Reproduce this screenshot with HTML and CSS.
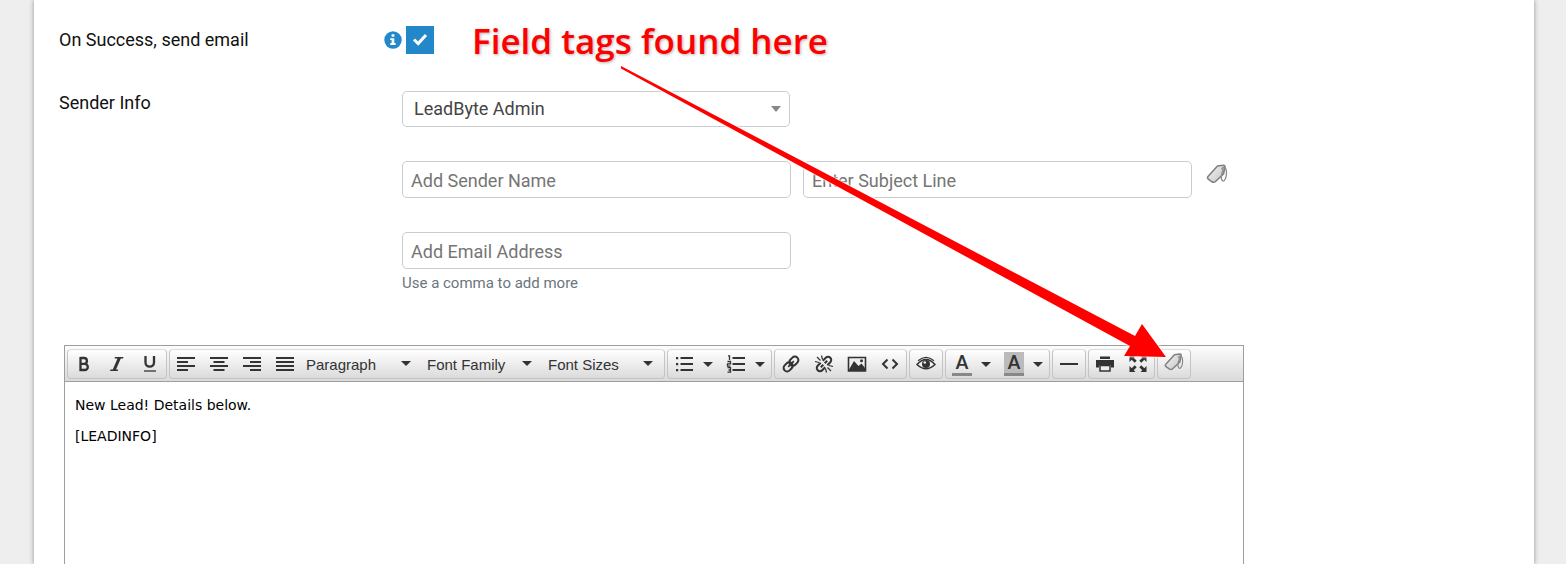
FILE: index.html
```html
<!DOCTYPE html>
<html lang="en">
<head>
    <meta charset="UTF-8">
    <meta name="viewport" content="width=device-width, initial-scale=1.0">
    <title>Email Notification Settings</title>
    <link rel="stylesheet" href="styles.css">
</head>
<body>
    <!-- tag icon shared by the subject line and the toolbar -->
    <svg class="defs" aria-hidden="true">
        <defs>
            <linearGradient id="tag-fill" x1="0" y1="0" x2="1" y2="1">
                <stop offset="0" stop-color="#f4f4f4"/>
                <stop offset="1" stop-color="#c4c4c4"/>
            </linearGradient>
        </defs>
        <symbol id="tag" viewBox="0 0 22 22">
            <path d="M11.500 3 L17.500 2.200 Q19 2.200 19 4 L17.500 11 L9.500 18.500 Q8 19.800 6 18.800 L2 15.800 Q1 14.800 2 13.500 Z" fill="url(#tag-fill)" stroke="#808080" stroke-width="1.600" stroke-linejoin="round"/>
            <path d="M15.500 6.500 C17 3.500 20.500 3.500 20.500 10 C20.500 15 18.500 18.500 17 18 C14.500 17 15 11 17.500 6" fill="none" stroke="#8a8a8a" stroke-width="1.300"/>
        </symbol>
    </svg>

    <main class="panel">
        <form class="form">
            <div class="row row-check">
                <div class="label-cell">
                    <label for="send-email">On Success, send email</label>
                    <button type="button" class="info" aria-label="Info">
                        <svg viewBox="0 0 18 18" width="18" height="18"><circle cx="9" cy="9" r="8.700" fill="#2388c9"/><path d="M7.600 3.300h2.800v2.500H7.600zM6.300 7.200h4v4.800h1.300v1.900H6.300V12h1.300V9H6.300z" fill="#fff"/></svg>
                    </button>
                </div>
                <div class="check">
                    <input type="checkbox" id="send-email" checked>
                    <svg viewBox="0 0 28 28" width="28" height="28"><path d="M8 13.500l4.200 4 7.800-8.500" fill="none" stroke="#fff" stroke-width="3"/></svg>
                </div>
            </div>

            <div class="row">
                <div class="label-cell"><label for="sender">Sender Info</label></div>
                <div class="fields">
                    <div class="select">
                        <select id="sender"><option>LeadByte Admin</option></select>
                    </div>
                    <div class="pair">
                        <input class="text" type="text" placeholder="Add Sender Name" aria-label="Sender name">
                        <input class="text" type="text" placeholder="Enter Subject Line" aria-label="Subject line">
                        <button type="button" class="tag-btn" aria-label="Field tags"><svg width="22" height="22"><use href="#tag"/></svg></button>
                    </div>
                    <div>
                        <input class="text" type="text" placeholder="Add Email Address" aria-label="Email address">
                        <p class="hint">Use a comma to add more</p>
                    </div>
                </div>
            </div>
        </form>

        <section class="editor">
            <div class="toolbar">
                <div class="group">
                    <button type="button" aria-label="Bold"><svg viewBox="0 0 20 20"><path d="M6.500 4h3.500a2.900 2.900 0 0 1 0 5.800H6.500M6.500 9.800h4.200a3.100 3.100 0 0 1 0 6.200H6.500zM6.500 3v14" fill="none" stroke="#333" stroke-width="2.300"/></svg></button>
                    <button type="button" aria-label="Italic"><svg viewBox="0 0 20 20"><path d="M8 3h8.500l-.5 1.500h-2.200L9 15.500h2.200l-.5 1.500H3l.5-1.500h2.300l4.700-11H7.500z" fill="#333"/></svg></button>
                    <button type="button" aria-label="Underline"><svg viewBox="0 0 20 20"><path d="M5.500 2v6.500c0 5.500 8.500 5.500 8.500 0V2" fill="none" stroke="#333" stroke-width="2.300"/><path d="M4 17h12" stroke="#333" stroke-width="1.300"/></svg></button>
                </div>
                <div class="group">
                    <button type="button" aria-label="Align left"><svg viewBox="0 0 20 20"><path d="M1 4h18M1 8h11M1 12h18M1 16h11" stroke="#333" stroke-width="2.200"/></svg></button>
                    <button type="button" aria-label="Align center"><svg viewBox="0 0 20 20"><path d="M1 4h18M4.500 8h11M1 12h18M4.500 16h11" stroke="#333" stroke-width="2.200"/></svg></button>
                    <button type="button" aria-label="Align right"><svg viewBox="0 0 20 20"><path d="M1 4h18M8 8h11M1 12h18M8 16h11" stroke="#333" stroke-width="2.200"/></svg></button>
                    <button type="button" aria-label="Justify"><svg viewBox="0 0 20 20"><path d="M1 4h18M1 8h18M1 12h18M1 16h18" stroke="#333" stroke-width="2.200"/></svg></button>
                    <div class="drop"><select aria-label="Block format"><option>Paragraph</option></select></div>
                    <div class="drop"><select aria-label="Font family"><option>Font Family</option></select></div>
                    <div class="drop"><select aria-label="Font size"><option>Font Sizes</option></select></div>
                </div>
                <div class="group">
                    <button type="button" class="split" aria-label="Bullet list"><svg viewBox="0 0 20 20"><path d="M6.500 4H19M6.500 10H19M6.500 16H19" stroke="#333" stroke-width="2.200"/><path d="M2 3h2.200v2.200H2zM2 9h2.200v2.200H2zM2 15h2.200v2.200H2z" fill="#333"/></svg></button>
                    <button type="button" class="split" aria-label="Numbered list"><svg viewBox="0 0 20 20"><path d="M6.500 4H19M6.500 10H19M6.500 16H19" stroke="#333" stroke-width="2.200"/><path d="M2 1.800h1.500V6M1.500 7.500h3v2.300h-3v2.400h3M1.500 13.700h3v4.500h-3M2.500 16h2" fill="none" stroke="#333" stroke-width="1.300"/></svg></button>
                </div>
                <div class="group">
                    <button type="button" aria-label="Insert link"><svg viewBox="0 0 20 20"><g transform="rotate(-45 10 10)" fill="none" stroke="#333"><rect x="1" y="6.500" width="10" height="7" rx="3.500" stroke-width="2"/><rect x="9" y="6.500" width="10" height="7" rx="3.500" stroke-width="2"/><path d="M6 10h8" stroke-width="1.600"/></g></svg></button>
                    <button type="button" aria-label="Remove link"><svg viewBox="0 0 20 20"><g transform="rotate(-45 10 10)" fill="none" stroke="#333" stroke-width="2"><path d="M8.500 6.800H4.300a3.200 3.200 0 0 0 0 6.400h4.200M11.500 6.800h4.200a3.200 3.200 0 0 1 0 6.400h-4.200M5.500 10H9M11 10h3.500"/></g><path d="M3 3l3.500 3.500M7.500 1.500l1 4M1 7.500l4 1M17 17l-3.500-3.500M12.500 18.500l-1-4M19 12.500l-4-1" stroke="#333" stroke-width="1.200"/></svg></button>
                    <button type="button" aria-label="Insert image"><svg viewBox="0 0 20 20"><path d="M1.500 3.500h17v13.500h-17z" fill="#eee" stroke="#333" stroke-width="1.600"/><path d="M2 15.500l5-8.500 4.500 5 3-2.500 3.500 4.500V17H2z" fill="#333"/><circle cx="14.500" cy="6.800" r="1.500" fill="#333"/></svg></button>
                    <button type="button" aria-label="Source code"><svg viewBox="0 0 20 20"><path d="M7.500 5.500L3 10l4.500 4.500M12.500 5.500L17 10l-4.500 4.500" fill="none" stroke="#333" stroke-width="2"/></svg></button>
                </div>
                <div class="group">
                    <button type="button" aria-label="Preview"><svg viewBox="0 0 20 20"><path d="M1 10.500Q10 .500 19 10.500 10 19 1 10.500z" fill="#f2f2f2" stroke="#333" stroke-width="1.500"/><path d="M2 6.800Q10 0 18 6.800" fill="none" stroke="#333" stroke-width="1.200"/><circle cx="10" cy="10" r="4" fill="#333"/><circle cx="8.800" cy="8.500" r="1.300" fill="#eee"/></svg></button>
                </div>
                <div class="group">
                    <button type="button" class="split color" aria-label="Text color"><span class="swatch">A</span></button>
                    <button type="button" class="split color" aria-label="Background color"><span class="swatch swatch-back">A</span></button>
                </div>
                <div class="group">
                    <button type="button" aria-label="Horizontal line"><svg viewBox="0 0 20 20"><path d="M1 10h18" stroke="#333" stroke-width="2"/></svg></button>
                </div>
                <div class="group">
                    <button type="button" aria-label="Print"><svg viewBox="0 0 20 20"><path d="M5 2.500h10v2.500H5zM1 6h18v7.500h-3V11H4v2.500H1z" fill="#333"/><path d="M5 11.500h10v5.500H5z" fill="#eee" stroke="#333" stroke-width="1.500"/></svg></button>
                    <button type="button" aria-label="Fullscreen"><svg viewBox="0 0 20 20"><path d="M1.500 2h6L5.700 3.800l3 3-2 2-3-3L1.500 8zM18.500 2v6l-2.200-2.200-3 3-2-2 3-3L12.500 2zM1.500 18v-6l2.200 2.200 3-3 2 2-3 3L7.500 18zM18.500 18h-6l1.800-1.800-3-3 2-2 3 3 2.200-2.200z" fill="#333"/></svg></button>
                </div>
                <div class="group">
                    <button type="button" class="tag-tool" aria-label="Insert field tag"><svg><use href="#tag"/></svg></button>
                </div>
            </div>
            <div class="editor-body" contenteditable="true" spellcheck="false">
                <p>New Lead! Details below.</p>
                <p>[LEADINFO]</p>
            </div>
        </section>
    </main>

    <div class="note">Field tags found here</div>
    <svg class="arrow" viewBox="0 0 560 310" width="560" height="310" aria-hidden="true">
        <path d="M11 6 L525 276 L532 264 L556 297 L514 296 L520 286 L11 8.500 Z" fill="#fe0000"/>
    </svg>
</body>
</html>
```
FILE: styles.css
```css
* {
    box-sizing: border-box;
}
body {
    margin: 0;
    background: #eee;
    color: #111;
    font-family: Roboto, sans-serif;
    font-size: 18px;
    line-height: 24px;
}
button {
    padding: 0;
    border: none;
    background: none;
    cursor: pointer;
}
svg {
    display: block;
}
.defs {
    position: absolute;
    width: 0;
    height: 0;
}
.panel {
    display: flex;
    flex-direction: column;
    min-height: 100vh;
    margin: 0 32px 0 34px;
    padding: 26px 25px 0;
    background: #fff;
    box-shadow: 0 0 5px rgba(0, 0, 0, 0.4);
}

/* form */
.form {
    display: flex;
    flex-direction: column;
    gap: 37px;
}
.row {
    display: grid;
    grid-template-columns: 343px 1fr;
}
.row-check {
    column-gap: 4px;
}
.label-cell {
    display: flex;
    justify-content: space-between;
    align-items: center;
    align-self: start;
}
.row-check .label-cell {
    align-self: center;
}
.info {
    border-radius: 50%;
}
.check {
    display: grid;
    width: 28px;
    height: 28px;
}
.check input,
.check svg {
    grid-area: 1 / 1;
}
.check input {
    appearance: none;
    width: 28px;
    height: 28px;
    margin: 0;
    background: #2388c9;
}
.check svg {
    pointer-events: none;
}
.fields {
    display: flex;
    flex-direction: column;
    gap: 34px;
}
.select,
.drop {
    position: relative;
}
.select {
    max-width: 388px;
}
.select select {
    appearance: none;
    display: block;
    width: 100%;
    height: 36px;
    padding: 0 30px 0 11px;
    border: 1px solid #c8cccf;
    border-radius: 5px;
    background: #fff;
    color: #444;
    font: inherit;
}
.select::after,
.drop::after,
.split::after {
    content: "";
    border: 5px solid transparent;
    border-top-color: #333;
    border-bottom: 0;
    pointer-events: none;
}
.select::after {
    position: absolute;
    top: 15px;
    right: 9px;
    border-top-width: 6px;
    border-top-color: #888;
}
.pair {
    display: flex;
    gap: 12px;
}
.text {
    display: block;
    width: 100%;
    max-width: 389px;
    height: 37px;
    padding: 1px 8px 0;
    border: 1px solid #c8cccf;
    border-radius: 5px;
    background: #fff;
    font: inherit;
}
.text::placeholder {
    color: #757575;
}
.tag-btn {
    align-self: flex-start;
    padding: 2px;
}
.hint {
    margin: 2px 0 0;
    color: #6c757d;
    font-size: 15px;
}

/* editor */
.editor {
    display: flex;
    flex-direction: column;
    flex: 1;
    max-width: 1180px;
    width: 100%;
    margin: 50px 0 0 5px;
    border: 1px solid #9e9e9e;
    border-bottom: none;
}
.toolbar {
    display: flex;
    gap: 2px;
    padding: 3px 2px 2px;
    border-bottom: 1px solid #9e9e9e;
    background: linear-gradient(#fdfdfd, #dadada);
}
.group {
    display: flex;
    gap: 1px;
    border: 1px solid #c4c4c4;
    border-top-color: #dcdcdc;
    border-radius: 4px;
    background: linear-gradient(#fff, #dbdbdb);
}
.group button {
    display: flex;
    align-items: center;
    justify-content: center;
    width: 32px;
    height: 28px;
}
.group svg {
    width: 20px;
    height: 20px;
}
.group .tag-tool {
    align-items: flex-start;
    padding-top: 2px;
}
.group .split {
    gap: 9px;
    width: 51px;
}
.drop select {
    appearance: none;
    display: block;
    width: 120px;
    height: 28px;
    padding: 0 20px 0 4px;
    border: none;
    background: none;
    color: #333;
    font: 15px "Liberation Sans", Arial, sans-serif;
}
.drop::after {
    position: absolute;
    top: 11px;
    right: 11px;
}
.swatch {
    width: 20px;
    height: 24px;
    border-bottom: 3px solid #888;
    color: #333;
    font: bold 18px/20px Lato, sans-serif;
}
.swatch-back {
    background: #bbb;
}
.editor-body {
    flex: 1;
    padding: 15px 10px;
    color: #000;
    font: 14px/17px "DejaVu Sans", Verdana, sans-serif;
    outline: none;
}
.editor-body p {
    margin: 0 0 14px;
}

/* callout drawn over the form */
.note {
    position: absolute;
    top: 17px;
    left: 472px;
    color: #fe0000;
    font: 600 35px/48px "Open Sans", sans-serif;
    text-shadow: 1px 1px 3px rgba(0, 0, 0, 0.3);
    white-space: nowrap;
}
.arrow {
    position: absolute;
    top: 60px;
    left: 610px;
    filter: drop-shadow(0 0 1px #fff) drop-shadow(0 0 1px rgba(255, 255, 255, 0.8));
    pointer-events: none;
}
```
